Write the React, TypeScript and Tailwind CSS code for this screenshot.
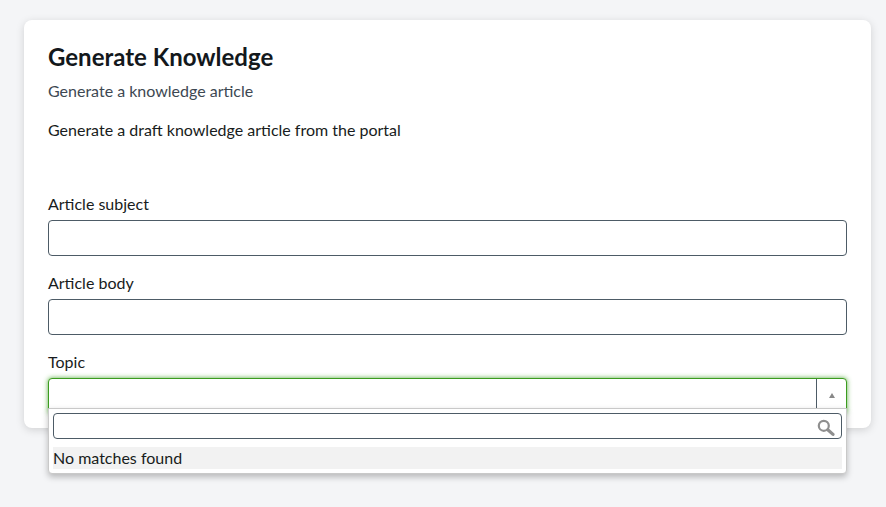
const font = "font-['Lato',sans-serif]"

function Field({ label }: { label: string }) {
  return (
    <div className="mb-4">
      <label className="block text-[16px] leading-[22px] mb-[5px] text-[#181c20]">{label}</label>
      <input
        type="text"
        className="block w-full h-9 bg-white border border-[#4d5b66] rounded-[4px] outline-none"
      />
    </div>
  )
}

function TopicSelect() {
  return (
    <div className="relative">
      <label className="block text-[16px] leading-[22px] mb-[5px] text-[#181c20]">Topic</label>
      <div className="flex h-9 bg-white border border-[#3b9c1f] rounded-[4px] shadow-[0_0_5px_rgba(60,160,30,0.85)]">
        <div className="flex-1" />
        <div className="w-[30px] h-[30px] border-l border-[#4d5b66] flex items-center justify-center">
          <div className="w-0 h-0 mt-[2px] border-x-[3px] border-x-transparent border-b-[5px] border-b-[#888888]" />
        </div>
      </div>
      <div className="absolute left-0 right-0 top-[57px] h-[66px] bg-white border border-[#c9c9c9] rounded-b-[4px] shadow-[0_3px_6px_rgba(0,0,0,0.25)] px-1 pt-1">
        <div className="relative h-[26px] border border-[#4d5b66] rounded-[4px] bg-white">
          <svg className="absolute right-[6px] top-[5px]" width="18" height="18" viewBox="0 0 18 18" fill="none">
            <circle cx="6.8" cy="6.8" r="5" stroke="#8f8f8f" strokeWidth="2.2" />
            <path d="M10.8 10.8L16 15.4" stroke="#8f8f8f" strokeWidth="3.2" strokeLinecap="round" />
          </svg>
        </div>
        <div className="mt-2 h-[22px] bg-[#f2f2f2] text-[16px] leading-[22px] text-[#181c20]">No matches found</div>
      </div>
    </div>
  )
}

export default function App() {
  return (
    <div className={`${font} w-[886px] h-[507px] overflow-hidden bg-[#f4f5f7] pt-5 pl-6`}>
      <div className="w-[847px] h-[408px] bg-white rounded-[8px] shadow-[0_2px_8px_rgba(0,0,0,0.15)] px-6 pt-[22px]">
        <h1 className="text-[24px] leading-[30px] font-bold text-[#13181c]">Generate Knowledge</h1>
        <p className="mt-2 text-[16px] leading-[22px] text-[#3d4852]">Generate a knowledge article</p>
        <p className="mt-[17px] text-[16px] leading-[22px] text-[#181c20]">Generate a draft knowledge article from the portal</p>
        <div className="mt-[52px]">
          <Field label="Article subject" />
          <Field label="Article body" />
          <TopicSelect />
        </div>
      </div>
    </div>
  )
}
